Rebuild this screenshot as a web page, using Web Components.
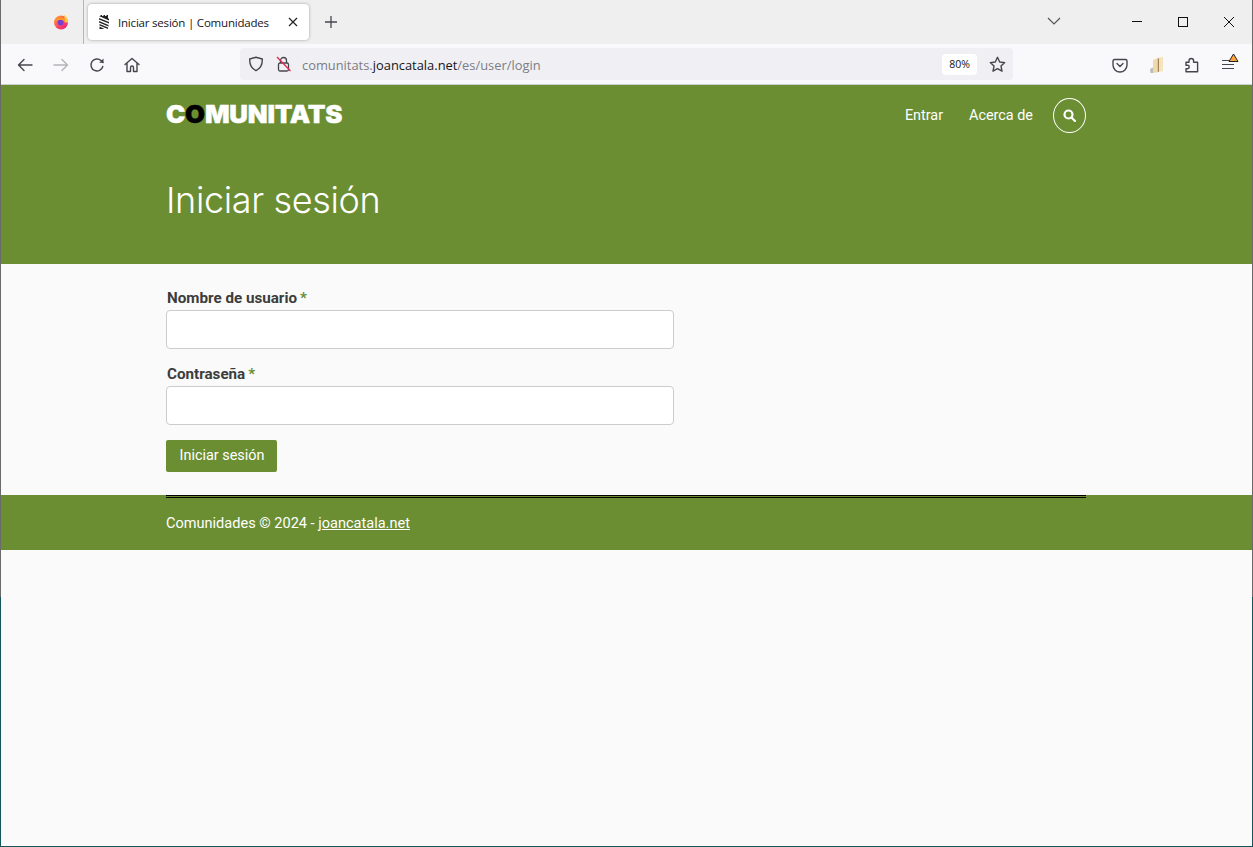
<!DOCTYPE html>
<html lang="es"><head><meta charset="utf-8"><title>Iniciar sesión | Comunidades</title>
<style>
html,body{margin:0;height:100%;background:#fafafa;overflow:hidden}
body{font-family:Roboto,sans-serif;display:flex;flex-direction:column;height:847px;box-sizing:border-box;border-left:1px solid #6a6a6a;border-image:linear-gradient(to bottom,#6a6a6a 597px,#14565a 597px) 1;border-bottom:1px solid #14565a;border-right:1px solid #14565a}
</style></head><body>
<browser-tabs></browser-tabs>
<browser-toolbar></browser-toolbar>
<site-header></site-header>
<login-form></login-form>
<site-footer></site-footer>
<script>
function el(name,html){customElements.define(name,class extends HTMLElement{constructor(){super();this.attachShadow({mode:'open'}).innerHTML=html}})}
const I='fill="none" stroke="#45454d" stroke-width="1.4" stroke-linecap="round" stroke-linejoin="round"';
el('browser-tabs',`<style>
:host{display:flex;height:44px;background:#efefef;align-items:center;flex:none;font-family:"Open Sans",sans-serif}
.left{width:83px;height:44px;box-sizing:border-box;border-right:1px solid #b5b5b5;display:flex;align-items:center;justify-content:flex-end;padding-right:14px}
.tab{margin-left:4px;width:221px;height:36px;box-sizing:border-box;background:#fff;border-radius:4px;box-shadow:0 0 3px rgba(0,0,0,.35);display:flex;align-items:center;padding:0 10px 0 11px;font-size:11.500px;color:#15141a;white-space:nowrap}
.tab span{margin-left:9px;flex:1;letter-spacing:-.2px}
.plus{margin-left:15px}
.sp{flex:1}
.ctl{display:flex;align-items:center}
</style>
<div class="left"><svg width="16" height="16" viewBox="0 0 16 16"><defs><linearGradient id="f" x1="0" y1="0" x2="1" y2="1"><stop offset="0" stop-color="#ffb02e"/><stop offset=".5" stop-color="#ff4f5e"/><stop offset="1" stop-color="#e31587"/></linearGradient></defs><circle cx="8" cy="8.500" r="7" fill="url(#f)"/><path d="M11 .8c3 2 4.400 5 4 7.700h-3z" fill="#ffc93c"/><circle cx="7.500" cy="8.500" r="3" fill="#7a3fd0"/><path d="M3 6.500c1-2.500 4-3.500 6-3 2.400.7 3.400 3 2.800 5.300-.8-2-2.300-3.300-4.300-3.100-1.500.2-3 .6-4.500.8z" fill="#ff9a1f"/></svg></div>
<div class="tab"><svg width="10" height="14" viewBox="0 0 10 14"><path d="M0 1h1.500V0H3v1h1.500V0H6v1h1.500V0H9v3L10 4v1.500L1 1.500zM0 3l10 4v1.500L0 4.500zM0 6l9.500 4v1.500L0 7.500zM.5 9l8.500 3.500V14L.5 10.500zM.5 11.500l5 2.500h-5z" fill="#222"/></svg><span>Iniciar sesión | Comunidades</span>
<svg width="12" height="12" viewBox="0 0 12 12"><path d="M2 2l8 8M10 2l-8 8" stroke="#222" stroke-width="1.200"/></svg></div>
<svg class="plus" width="14" height="14" viewBox="0 0 14 14"><path d="M7 1v12M1 7h12" stroke="#45454d" stroke-width="1.300"/></svg>
<div class="sp"></div>
<svg width="14" height="9" viewBox="0 0 14 9" style="margin:-2px 53px 0 0"><path d="M1 1l6 6 6-6" fill="none" stroke="#55555c" stroke-width="1.200"/></svg>
<div class="ctl">
<svg width="46" height="12" viewBox="0 0 46 12"><path d="M18 5.500h10" stroke="#111" stroke-width="1"/></svg>
<svg width="46" height="12" viewBox="0 0 46 12"><rect x="18.500" y="1.500" width="9" height="9" fill="none" stroke="#111"/></svg>
<svg width="46" height="12" viewBox="0 0 46 12"><path d="M18 1l10 10M28 1L18 11" stroke="#111" stroke-width="1"/></svg>
</div>`);
el('browser-toolbar',`<style>
:host{display:flex;height:41px;box-sizing:border-box;border-bottom:1px solid #cfcfd3;background:#f9f9fb;align-items:center;flex:none;font-family:"Open Sans",sans-serif;padding:1px 0 0 16px}
svg{flex:none;display:block}
.url{margin:-1px 0 0 100px;width:773px;height:32px;background:#f0f0f4;border-radius:4px;display:flex;align-items:center;padding-left:8px;box-sizing:border-box;font-size:12.880px;color:#7c7c85;white-space:nowrap}
.url b{font-weight:400;color:#15141a}
.t{margin:1px 0 0 10px;flex:1}
.zoom{width:35px;height:21px;background:#fff;border-radius:4px;font-size:10.500px;color:#15141a;display:flex;align-items:center;justify-content:center;margin-right:12px}
</style>
<svg width="16" height="16" viewBox="0 0 16 16" ${I}><path d="M15 8H1.500M7 2.500L1.500 8 7 13.500"/></svg>
<svg width="16" height="16" viewBox="0 0 16 16" style="margin-left:20px" fill="none" stroke="#b4b4b9" stroke-width="1.400" stroke-linecap="round" stroke-linejoin="round"><path d="M1 8h13.500M9 2.500L14.500 8 9 13.500"/></svg>
<svg width="16" height="16" viewBox="0 0 16 16" style="margin-left:20px" ${I}><path d="M13.800 9.500A6 6 0 1 1 12 3.500L14 5.500"/><path d="M14.500 1.500v4.300h-4.300" fill="#45454d" stroke="none"/></svg>
<svg width="16" height="16" viewBox="0 0 16 16" style="margin-left:19px" ${I}><path d="M1 7.500L8 1.500l7 6M3 6v8.500h3.500V10.500a1.500 1.500 0 0 1 3 0v4H13V6"/></svg>
<div class="url">
<svg width="16" height="16" viewBox="0 0 16 16" ${I}><path d="M8 1.300L14.300 3c.2 5.500-1.800 9.500-6.300 11.700C3.500 12.500 1.500 8.500 1.700 3z"/></svg>
<svg width="16" height="16" viewBox="0 0 16 16" style="margin-left:12px"><rect x="2.500" y="7" width="10" height="8" rx="1.500" fill="none" stroke="#45454d" stroke-width="1.300"/><path d="M4.500 7V4.500a3 3 0 0 1 6 0V7" fill="none" stroke="#45454d" stroke-width="1.300"/><path d="M1 1l13.500 14" stroke="#e22850" stroke-width="1.300"/></svg>
<span class="t">comunitats.<b>joancatala.net</b>/es/user/login</span>
<span class="zoom">80%</span>
<svg width="17" height="17" viewBox="0 0 17 17" style="margin-right:7px" ${I}><path d="M8.500 1.300l2.200 4.700 5 .6-3.700 3.500 1 5.100-4.500-2.600-4.500 2.600 1-5.100L1.300 6.600l5-.6z"/></svg>
</div>
<svg width="16" height="16" viewBox="0 0 16 16" style="margin-left:99px" ${I}><path d="M2.500 2.500h11A1.500 1.500 0 0 1 15 4v4a7 7 0 0 1-14 0V4a1.500 1.500 0 0 1 1.500-1.500z"/><path d="M5 6.500l3 3 3-3"/></svg>
<svg width="16" height="18" viewBox="0 0 16 18" style="margin-left:21px"><path d="M4 4l6-2.500V16l-6 1z" fill="#f0d9aa"/><path d="M10 1.500l4-.5v14l-4 1z" fill="#f6e3bd"/><path d="M8.800 3v13l1.200-.5V2z" fill="#9b8458"/><path d="M1 13l3-1.500V17H1.500z" fill="#bcbcbc"/></svg>
<svg width="16" height="16" viewBox="0 0 16 16" style="margin-left:19px" ${I}><path d="M2 5h3V3.500a2.300 2.300 0 0 1 4.600 0V5h4v9.500H2v-3h1.500a1.700 1.700 0 0 0 0-3.500H2z" transform="translate(0 .3)"/></svg>
<span style="position:relative;margin-left:20px;display:block;width:16px;height:16px"><svg width="16" height="16" viewBox="0 0 16 16" fill="none" stroke="#45454d" stroke-width="1.100"><path d="M2 3.500h9M2 7.500h12M2 11.500h12"/></svg><svg width="11" height="10" viewBox="0 0 11 10" style="position:absolute;left:8px;top:-4px"><path d="M5.500 1L10 8.500H1z" fill="#ffa436" stroke="#222" stroke-width="1" stroke-linejoin="round"/></svg></span>`);
el('site-header',`<style>
:host{display:block;height:179px;background:#6b8e33;color:#fff;flex:none;box-sizing:border-box;padding:0 166px 0 165px}
.top{display:flex;align-items:center;height:60px}
.logo{font-family:Inter,sans-serif;font-weight:900;font-size:24px;letter-spacing:-.2px;line-height:58px;height:58px;transform-origin:left center;transform:scaleX(1.075);-webkit-text-stroke:.4px currentColor}
.logo i{font-style:normal;color:#000}
.sp{flex:1}
nav{display:flex;align-items:center;font-size:14.400px}
nav span+span{margin-left:26px}
.s{width:31px;height:33px;border:1.500px solid #fff;border-radius:50%;margin-left:20px!important;display:flex;align-items:center;justify-content:center}
h1{margin:33px 0 0;font:300 36px "Inter",sans-serif;letter-spacing:-.35px;line-height:44px}
</style>
<div class="top"><span class="logo">C<i>O</i>MUNITATS</span><span class="sp"></span><nav><span>Entrar</span><span>Acerca de</span><span class="s"><svg width="13" height="13" viewBox="0 0 13 13" fill="none" stroke="#fff" stroke-width="2.200"><circle cx="5.500" cy="5.500" r="4"/><path d="M8.500 8.500L12 12" stroke-linecap="round"/></svg></span></nav></div>
<h1>Iniciar sesión</h1>`);
el('form-field',`<style>
:host{display:block;margin-bottom:16px}
label{display:block;font-weight:700;font-size:15.200px;line-height:20px;color:#3c3c3c;margin:0 0 2px 1px}
label i{font-style:normal;color:#6b8e33;margin-left:3px}
.in{display:block;box-sizing:border-box;width:508px;height:39px;background:#fff;border:1px solid #ccc;border-radius:4px}
</style><label><slot></slot><i>*</i></label><div class="in"></div>`);
el('login-form',`<style>
:host{display:block;height:231px;flex:none;box-sizing:border-box;padding:24px 0 0 165px;background:#fafafa;overflow:hidden}
.b{box-sizing:border-box;width:111px;height:32px;background:#6b8e33;color:#fff;border-radius:2px;font-size:14.400px;display:flex;align-items:center;justify-content:center;margin-top:-1px;padding:0 0 2px 1px}
form-field+form-field{margin-top:-1px}
</style><form-field>Nombre de usuario</form-field><form-field>Contraseña</form-field><div class="b">Iniciar sesión</div>`);
el('site-footer',`<style>
:host{display:block;height:55px;background:#6b8e33;color:#fff;flex:none;box-sizing:border-box;padding:0 166px 0 165px;font-size:14.560px}
.in{border-top:3px double #000;height:52px;display:flex;align-items:center}
.in span{margin-top:-2px}
a{color:#fff;text-decoration:underline}
</style><div class="in"><span>Comunidades © 2024 - <a>joancatala.net</a></span></div>`);
</script></body></html>
